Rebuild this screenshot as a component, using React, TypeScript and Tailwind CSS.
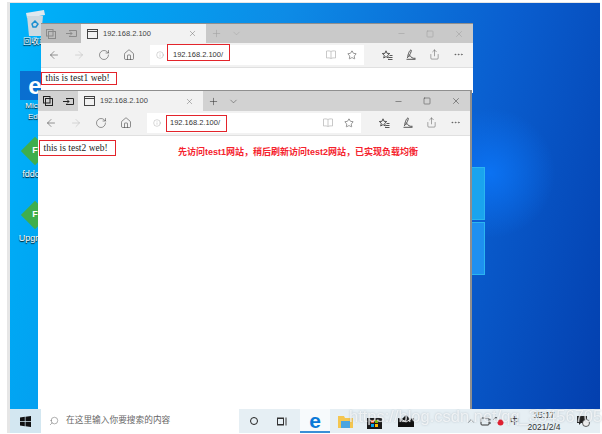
import { ArrowLeft, ArrowRight, ChevronDown, ChevronUp, Ellipsis, House, Info, Minus, Plus, RotateCw, Search, Share, Square, Star, X } from 'lucide-react';

const sans = 'font-["Liberation_Sans","Noto_Sans_CJK_SC",sans-serif]';

function TabIcons({ dim }: { dim?: boolean }) {
  const c = dim ? 'text-[#8a8a8a]' : 'text-[#222]';
  return (
    <div className={`flex w-[40px] items-center justify-center gap-[10px] self-stretch ${dim ? 'bg-[#bdbdbd]' : 'bg-[#d2d2d2]'} ${c}`}>
      <svg width="10" height="10" viewBox="0 0 10 10" fill="none" stroke="currentColor">
        <rect x="0.5" y="0.5" width="6.5" height="6.5" />
        <rect x="2.5" y="2.5" width="7" height="7" />
      </svg>
      <svg width="11" height="9" viewBox="0 0 11 9" fill="none" stroke="currentColor">
        <path d="M3 1.5h7.5v6H3M0 4.5h6M4 2.5l2 2-2 2" />
      </svg>
    </div>
  );
}

function Browser({ box, dim }: { box: string; dim?: boolean }) {
  const ctl = dim ? 'text-[#9a9a9a]' : 'text-[#333]';
  return (
    <div className={`absolute flex flex-col border-t border-[#8f8f8f] bg-white ${box} ${dim ? '' : 'border-r-2'}`}>
      <div className={`flex items-center ${dim ? 'h-[19px] bg-[#c9c9c9]' : 'h-[20px] bg-[#d2d2d2]'}`}>
        <TabIcons dim={dim} />
        <div className="flex h-full w-[125px] items-center gap-[5px] bg-[#f2f2f2] pl-[6px] pr-[9px] text-[#444]">
          <svg width="11" height="10" viewBox="0 0 11 10" fill="none" stroke="#444">
            <rect x="0.5" y="0.5" width="10" height="9" />
            <path d="M0.5 2.5h10" />
          </svg>
          <span className="flex-1 text-[7.5px]">192.168.2.100</span>
          <X size={9} strokeWidth={1.2} className="text-[#666]" />
        </div>
        <div className={`flex items-center gap-[9px] pl-[5px] ${dim ? 'text-[#a0a0a0]' : 'text-[#333]'}`}>
          <Plus size={11} strokeWidth={1.2} />
          <ChevronDown size={11} strokeWidth={1} />
        </div>
        <div className={`ml-auto flex items-center gap-[20px] pr-[9px] ${ctl}`}>
          <Minus size={9} strokeWidth={1.3} />
          <Square size={8} strokeWidth={1.4} />
          <X size={10} strokeWidth={1.2} />
        </div>
      </div>
      <div className="flex h-[25px] items-center border-b border-[#e0e0e0] bg-[#f2f2f2] pb-px pl-[7px]">
        <div className="flex items-center gap-[13px] text-[#444]">
          <ArrowLeft size={12} strokeWidth={1.1} />
          <ArrowRight size={12} strokeWidth={1.1} className="text-[#bbb]" />
          <RotateCw size={12} strokeWidth={1.1} />
          <House size={12} strokeWidth={1.2} />
        </div>
        <div className="relative ml-[15px] flex h-[20px] w-[214px] items-center bg-white pl-[6px] pr-[7px]">
          <Info size={8} strokeWidth={1} className="text-[#888]" />
          <span className="ml-[9px] text-[7.5px] text-[#333]">192.168.2.100/</span>
          <svg className="ml-auto text-[#bbb]" width="10" height="9" viewBox="0 0 10 9" fill="none" stroke="currentColor" strokeWidth="0.8">
            <path d="M5 1.5C4 .8 2 .8.5 1v7c1.500-.2 3.500-.2 4.500.5 1-.7 3-.7 4.500-.5V1C8 .8 6 .8 5 1.500zM5 1.500v7" />
          </svg>
          <Star size={10} strokeWidth={1.2} className="ml-[11px] text-[#333]" />
          <div className={`absolute h-[17px] border-[1.5px] border-[#e3242b] ${dim ? 'left-[17px] top-[-1px] w-[63px]' : 'left-[19px] top-[2px] w-[61px]'}`} />
        </div>
        <div className="ml-[18px] flex items-center gap-[13px] text-[#444]">
          <svg width="11" height="10" viewBox="0 0 11 10" fill="none" stroke="currentColor" strokeWidth="0.9">
            <path d="M4 .8l1 2.500 2.700.2-2 1.800.6 2.700L4 6.600 1.700 8l.6-2.700-2-1.800 2.700-.2zM7.500 5.500h3M7 7.500h3.500M6 9.500h4.500" />
          </svg>
          <svg width="10" height="11" viewBox="0 0 10 11" fill="none" stroke="currentColor" strokeWidth="0.9">
            <path d="M1.500 9C2 5 3.500 1 5 1c1 0-.5 4-2.500 6.500C4 6.500 5 7 5.500 8.500c1 .7 2.500 1 4 .8M.5 10.300h9" />
          </svg>
          <Share size={11} strokeWidth={1} />
          <Ellipsis size={11} strokeWidth={1.2} />
        </div>
      </div>
      <div className="flex-1 bg-white" />
    </div>
  );
}

function ShortcutDiamond({ y, label }: { y: string; label: string }) {
  return (
    <div className={`absolute left-[5px] flex w-[40px] flex-col items-center ${y}`}>
      <div className="flex h-[20px] w-[20px] rotate-45 items-center justify-center bg-[#3fae4c]">
        <span className="-rotate-45 text-[9px] font-bold text-white">F</span>
      </div>
      <span className="mr-[8px] mt-[8px] text-[9px] leading-[11px] text-white [text-shadow:0_1px_1px_#000]">{label}</span>
    </div>
  );
}

export default function App() {
  return (
    <div className={`h-[434px] w-[602px] overflow-hidden bg-white pl-[7px] pr-[2px] pt-[2px] pb-px ${sans}`}>
      <div className="flex h-full flex-col border-l-[3px] border-t border-[#e6e6e6] blur-[0.45px]">
        <main className="relative flex-1 overflow-hidden bg-[radial-gradient(circle_at_480px_170px,#0b72f2_0,#0b72f200_65px),linear-gradient(105deg,#00b4fb_0%,#00a8f4_12%,#0d8be6_40%,#0a5fd0_72%,#033fae_100%)]">
          {/* recycle bin */}
          <div className="absolute left-[10px] top-[4px] flex w-[30px] flex-col items-center">
            <svg width="24" height="30" viewBox="0 0 24 30">
              <path d="M3 6l18-3 1 5-18 3z" fill="#dfe8ee" />
              <path d="M4 9h16l-2 20H6z" fill="#cdd9e0" />
              <path d="M9 17l3-3 3 3-2 3h-3z" fill="none" stroke="#1c8fd0" strokeWidth="1.500" />
            </svg>
            <span className="text-[8px] leading-[10px] text-white [text-shadow:0_1px_1px_#000]">回收站</span>
          </div>
          {/* edge shortcut */}
          <div className="absolute left-[10px] top-[68px] flex w-[30px] flex-col items-center">
            <div className="flex h-[29px] w-[30px] items-center justify-center bg-[#0a6fd0] text-[24px] font-bold leading-none text-white">e</div>
            <span className="text-[8px] leading-[11px] text-white [text-shadow:0_1px_1px_#000]">Micro</span>
            <span className="text-[8px] leading-[11px] text-white [text-shadow:0_1px_1px_#000]">Edg</span>
          </div>
          <ShortcutDiamond y="top-[138px]" label="fddo" />
          <ShortcutDiamond y="top-[202px]" label="Upgra" />
          {/* windows logo behind the windows */}
          <div className="absolute left-[450px] top-[164px] grid w-[25px] gap-[2px]">
            <div className="h-[53px] border border-[#2bb5f0] bg-[#1aa4ee]" />
            <div className="h-[53px] border border-[#2bb5f0] bg-[#1e90f0]" />
          </div>

          <Browser box="left-[31px] top-[20px] z-10 h-[70px] w-[432px]" dim />
          <Browser box="left-[28px] top-[87px] z-20 h-[322px] w-[434px]" />

          {/* annotations on top of the page content */}
          <div className="absolute left-[31px] top-[69px] z-10 flex h-[13px] w-[76px] items-center whitespace-nowrap border-[1.5px] border-[#e3242b] pl-[3.5px] font-['Liberation_Serif',serif] text-[9.5px] text-[#222]">
            this is test1 web!
          </div>
          <div className="absolute left-[29px] top-[137px] z-30 flex h-[16px] w-[77px] items-center whitespace-nowrap border-[1.5px] border-[#e3242b] pl-[3.5px] font-['Liberation_Serif',serif] text-[9.5px] text-[#222]">
            this is test2 web!
          </div>
          <span className="absolute left-[168px] top-[143px] z-30 whitespace-nowrap text-[9px] font-bold text-[#f5222d]">
            先访问test1网站，稍后刷新访问test2网站，已实现负载均衡
          </span>
        </main>

        <footer className="relative flex h-[24px] items-center bg-[#e6eff4] text-[#333]">
          <div className="flex h-full w-[31px] items-center justify-center bg-[#d3e7f1]">
            <svg width="11" height="11" viewBox="0 0 11 11" fill="#111">
              <path d="M0 1.500l4.800-.7v4.300H0zM5.500.7L11 0v5.100H5.500zM0 5.800h4.800v4.400L0 9.500zM5.500 5.800H11V11l-5.500-.8z" />
            </svg>
          </div>
          <div className="flex h-full w-[198px] items-center gap-[7px] bg-white pl-[8px]">
            <Search size={10} strokeWidth={1.100} className="-scale-x-100 text-[#555]" />
            <span className="text-[8.7px] text-[#666]">在这里输入你要搜索的内容</span>
          </div>
          <div className="ml-[11px] h-[8px] w-[8px] rounded-full border-[1.500px] border-[#222]" />
          <svg className="ml-[19px]" width="11" height="9" viewBox="0 0 11 9" fill="none" stroke="#333">
            <rect x="0.500" y="1.500" width="6" height="6" />
            <path d="M9 .5v8M0 0h7M0 9h7" />
          </svg>
          {/* edge button */}
          <div className="ml-[12px] flex h-full w-[30px] items-center justify-center border-b-2 border-[#3a8fd6] bg-[#f7fafc] text-[21px] font-bold leading-none text-[#0a78d7]">e</div>
          <svg className="ml-[8px]" width="15" height="13" viewBox="0 0 15 13">
            <path d="M0 1h6l1 2h8v10H0z" fill="#f4c650" />
            <path d="M3 6h9v7H3z" fill="#4aa5e0" />
          </svg>
          <svg className="ml-[14px]" width="15" height="15" viewBox="0 0 15 15">
            <path d="M0 4h15v11H0z" fill="#1a1a1a" />
            <path d="M4 6h3v3H4z" fill="#f25022" />
            <path d="M8 6h3v3H8z" fill="#7fba00" />
            <path d="M4 10h3v3H4z" fill="#00a4ef" />
            <path d="M8 10h3v3H8z" fill="#ffb900" />
          </svg>
          <svg className="ml-[16px]" width="16" height="12" viewBox="0 0 16 12">
            <path d="M0 3l4 1 4-4 4 4 4-1v9H0z" fill="#111" />
            <path d="M3 4l5 3 5-3" fill="none" stroke="#eee" />
          </svg>
          <ChevronUp className="ml-[52px]" size={10} strokeWidth={1.300} />
          <svg className="ml-[4px]" width="11" height="11" viewBox="0 0 11 11" fill="none" stroke="#333">
            <rect x="1" y="2" width="8" height="7" rx="1" />
            <path d="M9 4h2M9 7h2" />
          </svg>
          <svg className="ml-[2px]" width="11" height="10" viewBox="0 0 11 10">
            <path d="M0 4c1-2 3-3 4-2" fill="none" stroke="#333" />
            <circle cx="7.500" cy="6.500" r="3" fill="#e02030" />
          </svg>
          <span className="ml-[6px] text-[9px] leading-none">中</span>
          <div className="ml-[8px] flex w-[34px] flex-col items-center text-[8.5px] leading-[12px] text-[#333]">
            <span>15:17</span>
            <span>2021/2/4</span>
          </div>
          <svg className="ml-[16px]" width="13" height="12" viewBox="0 0 13 12">
            <path d="M0 1h10v7H4l-2 2V8H0z" fill="#222" />
            <circle cx="9" cy="8" r="3.500" fill="#eee" stroke="#222" strokeWidth="0.700" />
          </svg>
          <span className="pointer-events-none absolute left-[339px] top-[-3px] whitespace-nowrap text-[16.5px] leading-[20px] text-white/70 [text-shadow:0_0_2px_#7f8c9880]">
            https://blog.csdn.net/qq_35456705
          </span>
        </footer>
      </div>
    </div>
  );
}
